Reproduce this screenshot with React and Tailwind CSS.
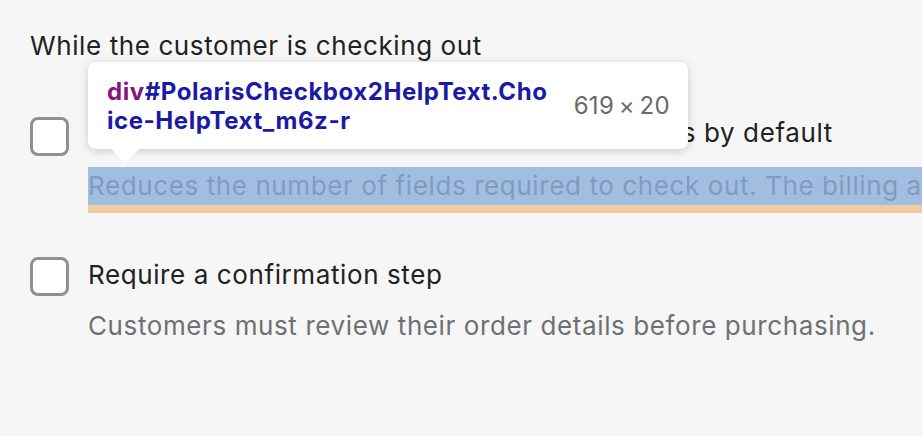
const Checkbox = () => (
  <div className="w-[39px] h-[39px] shrink-0 rounded-[8px] border-[3px] border-[#8c9196] bg-white" />
);

const App = () => {
  return (
    <div
      className="relative w-[922px] h-[436px] overflow-hidden bg-[#f6f6f6] text-[26px] leading-[38px] tracking-[0.6px] text-[#202223]"
      style={{ fontFamily: "Inter, 'Noto Sans', sans-serif" }}
    >
      <div className="pt-[27px] pl-[30px] flex flex-col">
        <p>While the customer is checking out</p>

        <div className="mt-[49px] flex gap-[19px]">
          <div className="pt-[3px]">
            <Checkbox />
          </div>
          <div className="flex flex-col">
            <span className="whitespace-nowrap">
              Use the shipping address as the billing address by default
            </span>
            <div className="mt-[15px] w-[1180px] bg-[#a1bee0] border-b-[8px] border-[#f0cc9f] text-[#7f9cc0] whitespace-nowrap overflow-hidden">
              Reduces the number of fields required to check out. The billing address can still be edited.
            </div>
          </div>
        </div>

        <div className="mt-[43px] flex gap-[19px]">
          <div className="pt-[1px]">
            <Checkbox />
          </div>
          <div className="flex flex-col">
            <span className="whitespace-nowrap">Require a confirmation step</span>
            <span className="mt-[13px] whitespace-nowrap text-[#6d7175]">
              Customers must review their order details before purchasing.
            </span>
          </div>
        </div>
      </div>

      <div className="absolute left-[88px] top-[62px] w-[600px] h-[87px] rounded-[8px] bg-white shadow-[0_2px_10px_rgba(0,0,0,0.18)] flex items-center justify-between pl-[19px] pr-[18px]">
        <div className="text-[24px] leading-[29px] tracking-[0.55px] font-bold text-[#1a1aa6]">
          <span className="text-[#881280]">div</span>#PolarisCheckbox2HelpText.Cho
          <br />
          ice-HelpText_m6z-r
        </div>
        <div className="text-[24px] tracking-[0.3px] text-[#6a6a6a] whitespace-nowrap">619{"\u2009×\u2009"}20</div>
        <div className="absolute left-[22px] bottom-[-14px] w-0 h-0 border-l-[15px] border-r-[15px] border-t-[15px] border-l-transparent border-r-transparent border-t-white" />
      </div>
    </div>
  );
};

export default App;
